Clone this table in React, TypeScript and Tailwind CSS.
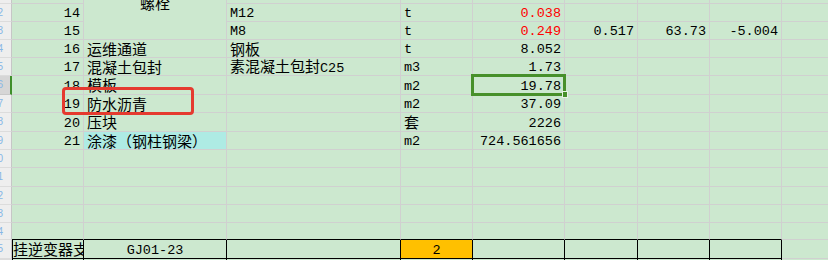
import { ReactNode } from 'react';

const CJK = "font-['Noto_Sans_CJK_SC',sans-serif] text-[15px]";
const MONO = "font-['Liberation_Mono',monospace] text-[13.5px]";

const isCjk = (ch: string) => /[\u3000-\u9fff\uff00-\uffef]/.test(ch);

// split a string into CJK / ascii runs so each gets its own font
const Txt = ({ s }: { s: string }) => {
  const runs: { cjk: boolean; t: string }[] = [];
  for (const ch of s) {
    const c = isCjk(ch);
    const last = runs[runs.length - 1];
    if (last && last.cjk === c) last.t += ch;
    else runs.push({ cjk: c, t: ch });
  }
  return (
    <span className="leading-[15px]">
      {runs.map((r, i) => (
        <span key={i} className={r.cjk ? CJK : MONO}>
          {r.t}
        </span>
      ))}
    </span>
  );
};

type Kind = 'n' | 'last' | 'top' | 'box' | 'boxL' | 'tail' | 'tailL' | 'plain';
const kinds: Record<Kind, string> = {
  n: 'border-r border-b border-r-[#d0d0d0] border-b-[#d0d0d0]',
  last: 'border-b border-b-[#d0d0d0]',
  top: 'border-r border-b border-r-[#d0d0d0] border-b-black',
  box: 'border-r border-b border-r-black border-b-black',
  boxL: 'border-l border-r border-b border-l-black border-r-black border-b-black',
  tail: 'border-r border-r-black',
  tailL: 'border-l border-r border-l-black border-r-black',
  plain: '',
};

type Align = 'l' | 'r' | 'c';
const aligns: Record<Align, string> = {
  l: 'justify-start pl-[3px]',
  r: 'justify-end pr-[3px]',
  c: 'justify-center',
};

interface CellProps {
  s?: string;
  a?: Align;
  k?: Kind;
  bg?: string;
  red?: boolean;
  children?: ReactNode;
}

const Cell = ({ s = '', a = 'l', k = 'n', bg = '', red = false, children }: CellProps) => (
  <div
    className={`relative flex items-center whitespace-nowrap ${kinds[k]} ${aligns[a]} ${bg} ${
      red ? 'text-[#ff0000]' : 'text-black'
    }`}
  >
    {s && <Txt s={s} />}
    {children}
  </div>
);

const Head = ({ n, sel = false }: { n?: number; sel?: boolean }) => (
  <div
    className={`overflow-hidden border-b ${
      sel
        ? 'border-r-2 border-r-[#3f8f2a] border-b-[#c8c8c8] bg-[#d6d6d6]'
        : 'border-r border-r-[#c6c6c6] border-b-[#dcdcdc] bg-[#eeeeee]'
    }`}
  >
    {n !== undefined && (
      <div className="-ml-[11px] w-[14px] pt-[3px] text-right font-['Liberation_Sans',sans-serif] text-[10px] leading-[12px] text-[#86b6e6]">
        {n}
      </div>
    )}
  </div>
);

type Row = { n: number; a: string; b?: string; c?: string; d?: string; e?: string; cyan?: boolean; sel?: boolean };

const items: Row[] = [
  { n: 14, a: '16', b: '运维通道', c: '钢板', d: 't', e: '8.052' },
  { n: 15, a: '17', b: '混凝土包封', c: '素混凝土包封C25', d: 'm3', e: '1.73' },
  { n: 16, a: '18', b: '模板', d: 'm2', e: '19.78', sel: true },
  { n: 17, a: '19', b: '防水沥青', d: 'm2', e: '37.09' },
  { n: 18, a: '20', b: '压块', d: '套', e: '2226' },
  { n: 19, a: '21', b: '涂漆（钢柱钢梁）', d: 'm2', e: '724.561656', cyan: true },
];

export default function App() {
  return (
    <div className="relative h-[260px] w-[828px] overflow-hidden bg-[#cce8cf]">
      <div className="grid grid-cols-[12px_72px_143px_174px_72px_92px_73px_72px_72px_46px] grid-rows-[4px_18px_18px_18px_18px_19px_18px_19px_18px_18px_19px_18px_18px_17px_19px_1px]">
        {/* partial row above */}
        <Head />
        <Cell />
        <div className="row-span-3 flex items-start justify-center overflow-hidden border-r border-b border-r-[#d0d0d0] border-b-[#d0d0d0]">
          <span className="-mt-[9px]">
            <Txt s="螺栓" />
          </span>
        </div>
        <Cell /><Cell /><Cell /><Cell /><Cell /><Cell /><Cell k="last" />

        {/* 14 */}
        <Head n={2} />
        <Cell s="14" a="r" />
        <Cell s="M12" />
        <Cell s="t" />
        <Cell s="0.038" a="r" red />
        <Cell /><Cell /><Cell /><Cell k="last" />

        {/* 15 */}
        <Head n={3} />
        <Cell s="15" a="r" />
        <Cell s="M8" />
        <Cell s="t" />
        <Cell s="0.249" a="r" red />
        <Cell s="0.517" a="r" />
        <Cell s="63.73" a="r" />
        <Cell s="-5.004" a="r" />
        <Cell k="last" />

        {items.map((r) => (
          <div key={r.n} className="contents">
            <Head n={r.n} sel={r.sel} />
            <Cell s={r.a} a="r" />
            <Cell s={r.b} bg={r.cyan ? 'bg-[#aeebe4]' : ''} />
            <Cell s={r.c} />
            <Cell s={r.d} />
            <Cell s={r.e} a="r">
              {r.sel && (
                <>
                  <div className="absolute -top-[2px] -right-[2px] -bottom-[2px] -left-[2px] z-10 border-[3px] border-[#47902a]" />
                  <div className="absolute -right-[4px] -bottom-[4px] z-20 h-[7px] w-[6px] border border-[#e8f3e6] bg-[#47902a]" />
                </>
              )}
            </Cell>
            <Cell /><Cell /><Cell /><Cell k="last" />
          </div>
        ))}

        {[20, 21, 22, 23].map((n) => (
          <div key={n} className="contents">
            <Head n={n} />
            <Cell /><Cell /><Cell /><Cell /><Cell /><Cell /><Cell /><Cell /><Cell k="last" />
          </div>
        ))}

        {/* row above the boxed line */}
        <Head n={24} />
        <Cell k="top" /><Cell k="top" /><Cell k="top" /><Cell k="top" /><Cell k="top" /><Cell k="top" /><Cell k="top" /><Cell k="top" /><Cell k="last" />

        {/* boxed line */}
        <Head n={25} />
        <div className="flex items-center overflow-hidden whitespace-nowrap border-l border-r border-b border-l-black border-r-black border-b-black">
          <Txt s="挂逆变器支架" />
        </div>
        <Cell s="GJ01-23" a="c" k="box" />
        <Cell k="box" />
        <Cell s="2" a="c" k="box" bg="bg-[#ffc000]" />
        <Cell k="box" /><Cell k="box" /><Cell k="box" /><Cell k="box" />
        <Cell k="last" />

        {/* sliver of next row */}
        <Head />
        <Cell k="tailL" />
        <Cell k="tail" /><Cell k="tail" /><Cell k="tail" /><Cell k="tail" /><Cell k="tail" /><Cell k="tail" /><Cell k="tail" />
        <Cell k="plain" />
      </div>

      {/* red annotation box */}
      <div className="absolute left-[62px] top-[87px] h-[28px] w-[132px] rounded-[4px] border-[3px] border-[#e53a2f]" />
    </div>
  );
}
